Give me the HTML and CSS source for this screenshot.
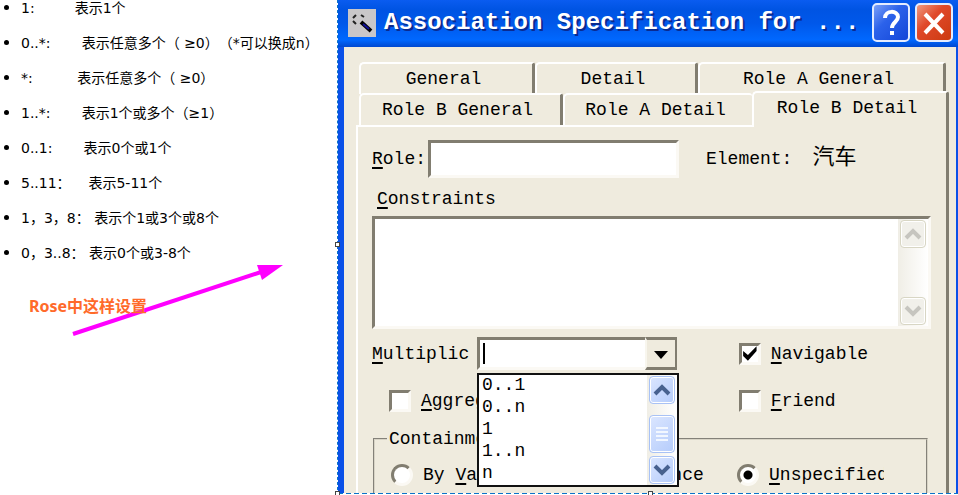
FILE: index.html
```html
<!DOCTYPE html>
<html lang="zh-CN">
<head>
<meta charset="utf-8">
<title>Association Specification</title>
<link rel="stylesheet" href="styles.css">
</head>
<body>
<main class="notes">
  <ul class="note-list">
    <li>1:&nbsp;&nbsp;&nbsp;&nbsp;&nbsp;&nbsp;&nbsp;&nbsp;&nbsp;表示1个</li>
    <li>0..*:&nbsp;&nbsp;&nbsp;&nbsp;&nbsp;&nbsp;&nbsp;表示任意多个（ ≥0）（*可以换成n）</li>
    <li>*:&nbsp;&nbsp;&nbsp;&nbsp;&nbsp;&nbsp;&nbsp;&nbsp;&nbsp;&nbsp;表示任意多个（ ≥0）</li>
    <li>1..*:&nbsp;&nbsp;&nbsp;&nbsp;&nbsp;&nbsp;&nbsp;表示1个或多个（≥1）</li>
    <li>0..1:&nbsp;&nbsp;&nbsp;&nbsp;&nbsp;&nbsp;&nbsp;表示0个或1个</li>
    <li>5..11：&nbsp;&nbsp;&nbsp;&nbsp;表示5-11个</li>
    <li>1，3，8：&nbsp;表示个1或3个或8个</li>
    <li>0，3..8：&nbsp;表示0个或3-8个</li>
  </ul>
  <div class="callout">
    <svg class="callout-arrow" width="212" height="74" viewBox="0 0 212 74" aria-hidden="true">
      <path d="M1 71 189 9" stroke="#f0f" stroke-width="4" fill="none"/>
      <path d="M185 2 211 2 190 17z" fill="#f0f"/>
    </svg>
    <p class="callout-text">Rose中这样设置</p>
  </div>
</main>

<section class="selection">
  <div class="dialog">
    <header class="titlebar">
      <svg class="app-icon" width="28" height="28" viewBox="0 0 28 28" aria-hidden="true">
        <rect width="28" height="28" fill="#c9c7c9"/>
        <path d="M5 9l3-3M13 6l3 2M5 12l3 3" stroke="#222" stroke-width="2"/>
        <path d="M13 13l10 9" stroke="#000" stroke-width="4"/>
        <path d="M15 15l6 5" stroke="#10109a" stroke-width="2"/>
      </svg>
      <h1 class="title">Association Specification for ...</h1>
      <button class="caption-button help" type="button" aria-label="Help">
        <svg width="34" height="34" viewBox="0 0 34 34" aria-hidden="true">
          <path d="M11 12c0-8 13-8 13-1 0 5-6 5-6 11" fill="none" stroke="#fff" stroke-width="4"/>
          <path d="M16 25h4v4h-4z" fill="#fff"/>
        </svg>
      </button>
      <button class="caption-button close" type="button" aria-label="Close">
        <svg width="34" height="34" viewBox="0 0 34 34" aria-hidden="true">
          <path d="M8 8 26 27M26 8 8 27" stroke="#fff" stroke-width="4"/>
        </svg>
      </button>
    </header>

    <div class="dialog-body">
      <nav class="tabs">
        <div class="tab-row tab-row-back">
          <button class="tab" type="button">General</button>
          <button class="tab" type="button">Detail</button>
          <button class="tab" type="button">Role A General</button>
        </div>
        <div class="tab-row tab-row-front">
          <button class="tab" type="button">Role B General</button>
          <button class="tab" type="button">Role A Detail</button>
          <button class="tab active" type="button">Role B Detail</button>
        </div>
      </nav>

      <form class="panel">
        <div class="role-row">
          <label class="role-label" for="role"><u>R</u>ole:</label>
          <input class="field role-input" id="role" type="text">
          <span class="element">Element:</span>
          <span class="element-name">汽车</span>
        </div>

        <label class="constraints-label" for="constraints"><u>C</u>onstraints</label>
        <div class="field constraints">
          <textarea class="constraints-input" id="constraints"></textarea>
          <div class="scrollbar disabled">
            <button class="scroll-button" type="button" aria-label="Scroll up"><svg width="18" height="12" viewBox="0 0 18 12"><path d="M2 10l7-7 7 7"/></svg></button>
            <button class="scroll-button" type="button" aria-label="Scroll down"><svg width="18" height="12" viewBox="0 0 18 12"><path d="M2 2l7 7 7-7"/></svg></button>
          </div>
        </div>

        <div class="options">
          <div class="multiplicity">
            <label class="multiplicity-label" for="multiplicity"><u>M</u>ultiplic</label>
            <div class="combo">
              <input class="field combo-input" id="multiplicity" type="text">
              <button class="combo-button" type="button" aria-label="Open list"><svg width="14" height="8" viewBox="0 0 14 8"><path d="M0 0h14L7 8z"/></svg></button>
              <div class="dropdown">
                <select class="dropdown-list" size="5" aria-label="Multiplicity values">
                  <option>0..1</option>
                  <option>0..n</option>
                  <option>1</option>
                  <option>1..n</option>
                  <option>n</option>
                </select>
                <div class="scrollbar">
                  <button class="scroll-button" type="button" aria-label="Scroll up"><svg width="18" height="12" viewBox="0 0 18 12"><path d="M2 10l7-7 7 7"/></svg></button>
                  <div class="scroll-thumb"><svg width="12" height="16" viewBox="0 0 12 16"><path d="M0 2h12M0 6h12M0 10h12M0 14h12"/></svg></div>
                  <button class="scroll-button" type="button" aria-label="Scroll down"><svg width="18" height="12" viewBox="0 0 18 12"><path d="M2 2l7 7 7-7"/></svg></button>
                </div>
              </div>
            </div>
          </div>
          <label class="choice"><input class="check" type="checkbox" checked><span><u>N</u>avigable</span></label>
          <label class="choice aggregate"><input class="check" type="checkbox"><span><u>A</u>ggregate</span></label>
          <label class="choice"><input class="check" type="checkbox"><span><u>F</u>riend</span></label>
        </div>

        <fieldset class="containment">
          <legend class="legend">Containment</legend>
          <div class="radios">
            <label class="choice"><input class="radio" type="radio" name="containment"><span>By <u>V</u>alue</span></label>
            <label class="choice"><input class="radio" type="radio" name="containment"><span>By <u>R</u>eference</span></label>
            <label class="choice"><input class="radio" type="radio" name="containment" checked><span class="clipped"><u>U</u>nspecified</span></label>
          </div>
        </fieldset>
      </form>
    </div>
  </div>
  <i class="handle handle-left"></i>
  <i class="handle handle-corner"></i>
  <i class="handle handle-bottom"></i>
</section>
</body>
</html>
```
FILE: styles.css
```css
* {
  box-sizing: border-box;
}

body {
  margin: 0;
  min-height: 100vh;
  display: flex;
  background: #fff;
  color: #000;
  font-family: "DejaVu Sans", "Noto Sans CJK SC", sans-serif;
  font-size: 14px;
}

button,
input,
textarea,
select {
  font: inherit;
  color: inherit;
  margin: 0;
  padding: 0;
  border: 0;
  border-radius: 0;
  appearance: none;
  outline: none;
}

u {
  text-decoration-thickness: 2px;
  text-underline-offset: 3px;
}

/* Notes */
.notes {
  flex: 0 0 337px;
}

.note-list {
  margin: 0;
  padding: 0 0 0 21px;
  line-height: 16px;
  white-space: nowrap;
  text-spacing-trim: space-all;
}

.note-list li {
  margin-bottom: 19px;
}

.note-list li::marker {
  font-family: "Noto Sans", sans-serif;
}

.callout {
  position: relative;
  padding: 14px 0 0 29px;
}

.callout-arrow {
  position: absolute;
  left: 72px;
  top: -17px;
}

.callout-text {
  position: relative;
  margin: 0;
  color: #ff6a2a;
  font-family: "Noto Sans", "Noto Sans CJK SC", sans-serif;
  font-size: 16px;
  font-weight: 700;
  line-height: 24px;
}

/* Selection frame around the dialog */
.selection {
  position: relative;
  flex: 1;
  min-width: 0;
  display: flex;
  padding-bottom: 1px;
  border-left: 1px dashed #0a74c8;
}

.selection::after {
  content: "";
  position: absolute;
  left: 0;
  right: 0;
  bottom: 1px;
  height: 1px;
  background: repeating-linear-gradient(90deg, #0a74c8 0 5px, #fff 5px 8px);
}

.handle {
  position: absolute;
  z-index: 3;
  width: 5px;
  height: 5px;
  border: 1px solid #444;
  background: #fff;
}

.handle-left {
  left: -3px;
  top: 242px;
}

.handle-corner {
  left: -3px;
  bottom: -1px;
}

.handle-bottom {
  left: 50%;
  bottom: -1px;
}

/* Dialog */
.dialog {
  flex: 1;
  min-width: 0;
  display: flex;
  flex-direction: column;
  background: #0a50e8;
  font-family: "Liberation Mono", "Noto Sans CJK SC", monospace;
  font-size: 18px;
  line-height: 22px;
}

.titlebar {
  display: flex;
  align-items: center;
  height: 47px;
  padding: 0 5px 2px 10px;
  background: linear-gradient(#0a5cf0, #0054e3 20%, #0058ea 50%, #0068ff 85%, #0048d0);
}

.app-icon {
  flex: none;
}

.title {
  flex: 1;
  margin: 0 0 0 8px;
  color: #fff;
  font-size: 24px;
  line-height: 28px;
  white-space: nowrap;
  text-shadow: 2px 2px 0 #0a2a90;
}

.caption-button {
  flex: none;
  width: 38px;
  height: 39px;
  margin-left: 5px;
  border: 2px solid #e4ecff;
  border-radius: 5px;
}

.caption-button svg {
  display: block;
}

.help {
  margin-left: 0;
  background: linear-gradient(135deg, #7ba0f8, #2c62ea 40%, #1446d8);
}

.close {
  background: linear-gradient(135deg, #f09a80, #e0492a 40%, #cc3a10);
}

.dialog-body {
  flex: 1;
  display: flex;
  flex-direction: column;
  margin: 0 2px 0 6px;
  padding: 15px 7px 0 12px;
  background: #efebde;
}

/* Tabs */
.tab-row {
  display: grid;
  align-items: end;
  padding: 0 0 0 3px;
}

.tab-row-back {
  grid-template-columns: 176fr 163fr 248fr;
  padding-right: 3px;
}

.tab-row-front {
  grid-template-columns: 204fr 189fr 197fr;
  margin-top: -3px;
}

.tab {
  height: 32px;
  padding-right: 6px;
  border: 2px solid #fff;
  border-right: 3px solid #817d70;
  border-bottom: 0;
  border-radius: 5px 3px 0 0;
  background: #efebde;
  white-space: nowrap;
}

.tab-row-front .tab:nth-child(2) {
  border-right: 0;
}

.tab.active {
  position: relative;
  z-index: 1;
  height: 36px;
  margin-bottom: -2px;
  padding-bottom: 5px;
}

.panel {
  flex: 1;
  display: flex;
  flex-direction: column;
  padding: 13px 15px 0 14px;
  border: 2px solid #fff;
  border-right: 3px solid #817d70;
  border-bottom: 0;
}

.field {
  background: #fff;
  border: 3px solid;
  border-color: #817d70 #fbf9f4 #fbf9f4 #817d70;
}

.role-row {
  display: flex;
  align-items: center;
}

.role-label {
  width: 56px;
}

.role-input {
  flex: 0 1 251px;
  min-width: 0;
  height: 38px;
}

.element {
  margin-left: 27px;
}

.element-name {
  margin-left: 20px;
  font-size: 22px;
}

.constraints-label {
  align-self: flex-start;
  margin: 10px 0 6px 5px;
}

.constraints {
  display: flex;
  height: 113px;
}

.constraints-input {
  flex: 1;
  min-width: 0;
  resize: none;
  background: transparent;
}

/* Scrollbars */
.scrollbar {
  flex: none;
  width: 30px;
  display: flex;
  flex-direction: column;
  justify-content: space-between;
  padding: 1px 2px;
  background: linear-gradient(90deg, #f0eee6, #fff);
}

.scroll-button,
.scroll-thumb {
  display: flex;
  align-items: center;
  justify-content: center;
  height: 28px;
  border: 1px solid #a9c2f5;
  border-radius: 4px;
  background: linear-gradient(135deg, #dbe6ff, #b5ccfb);
  box-shadow: inset 0 0 0 1px #fff;
}

.scroll-thumb {
  height: 38px;
  margin-top: 8px;
}

.scroll-button path {
  fill: none;
  stroke: #47618f;
  stroke-width: 4;
}

.scroll-thumb path {
  stroke: #f2f7ff;
  stroke-width: 2;
}

.disabled .scroll-button {
  border-color: #d8d6c4;
  background: #f1f0ea;
}

.disabled .scroll-button path {
  stroke: #c6c5bf;
}

/* Options */
.options {
  display: grid;
  grid-template-columns: minmax(0, 21fr) minmax(0, 11fr);
  row-gap: 20px;
  margin-top: 8px;
}

.multiplicity {
  display: flex;
  align-items: center;
}

.multiplicity-label {
  flex: none;
  width: 105px;
}

.combo {
  position: relative;
  flex: 0 1 200px;
  min-width: 0;
  display: flex;
}

.combo-input {
  flex: 1;
  min-width: 0;
  height: 33px;
  border-right: 0;
  background: linear-gradient(#000, #000) 3px 3px / 2px 21px no-repeat #fff;
}

.combo-button {
  flex: none;
  width: 32px;
  border: 2px solid;
  border-color: #817d70 #817d70 #817d70 #f8f6ee;
  border-top-width: 3px;
  border-bottom-width: 3px;
  background: #efebde;
}

.dropdown {
  position: absolute;
  z-index: 2;
  top: 36px;
  left: 0;
  width: 202px;
  display: flex;
  border: 2px solid #111;
  background: #fff;
}

.dropdown-list {
  flex: 1;
  min-width: 0;
  height: 110px;
  padding-left: 3px;
  overflow: hidden;
  scrollbar-width: none;
  background: #fff;
}

.dropdown-list option {
  min-height: 22px;
  padding: 0;
  line-height: 22px;
}

.choice {
  display: flex;
  align-items: center;
  gap: 10px;
  white-space: nowrap;
}

.aggregate {
  margin-left: 17px;
}

.check {
  flex: none;
  width: 22px;
  height: 22px;
  border: 3px solid;
  border-color: #817d70 #fbf9f4 #fbf9f4 #817d70;
  background: #fff;
}

.check:checked::before {
  content: "";
  display: block;
  width: 16px;
  height: 16px;
  background: #000;
  clip-path: polygon(8% 35%, 38% 60%, 92% 5%, 92% 35%, 38% 95%, 8% 65%);
}

.containment {
  flex: 1;
  min-width: 0;
  margin: 16px 3px 0 1px;
  padding: 14px 0 0 16px;
  border: 2px groove #d8d4c6;
  border-bottom: 0;
}

.legend {
  margin-left: -4px;
  padding: 0 2px;
}

.radios {
  display: grid;
  grid-template-columns: 152fr 196fr 190fr;
}

.radio {
  flex: none;
  width: 22px;
  height: 22px;
  border: 3px solid;
  border-color: #817d70 #fbf9f4 #fbf9f4 #817d70;
  border-radius: 50%;
  background: #fff;
}

.radio:checked {
  background: radial-gradient(circle, #000 4px, #fff 5px);
}

.clipped {
  width: 115px;
  overflow: hidden;
}
```
